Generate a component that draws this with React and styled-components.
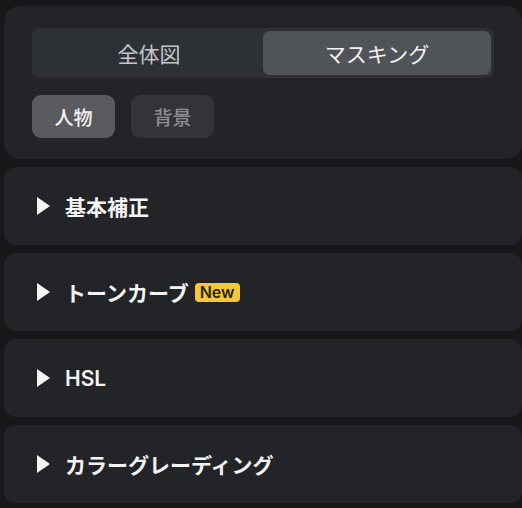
import React, { useState } from "react";
import styled, { createGlobalStyle } from "styled-components";

const GlobalStyle = createGlobalStyle`
  html, body {
    margin: 0;
    background: #17181a;
    font-family: Inter, "Noto Sans CJK JP", sans-serif;
  }
`;

const Page = styled.div`
  padding: 6px 0 0 4px;
  display: flex;
  flex-direction: column;
  gap: 8px;
`;

const Card = styled.div`
  background: #222427;
  border-radius: 16px;
  padding: 22px 28px 21px;
`;

const Segment = styled.div`
  display: grid;
  grid-template-columns: 1fr 1fr;
  background: #2d3135;
  border-radius: 8px;
  padding: 3px;
  height: 50px;
  box-sizing: border-box;
`;

const SegButton = styled.button`
  border: none;
  border-radius: 7px;
  background: ${p => (p.$active ? "#505357" : "transparent")};
  color: ${p => (p.$active ? "#f2f2f2" : "#c4c6c8")};
  font-family: inherit;
  font-size: 21px;
  cursor: pointer;
`;

const Chips = styled.div`
  display: flex;
  gap: 16px;
  margin-top: 17px;
`;

const Chip = styled.button`
  width: 83px;
  height: 43px;
  border: none;
  border-radius: 9px;
  background: ${p => (p.$active ? "#5a5b5e" : "#333437")};
  color: ${p => (p.$active ? "#f4f4f4" : "#8e8f91")};
  font-family: inherit;
  font-size: 19px;
  font-weight: 500;
  cursor: pointer;
`;

const Section = styled.div`
  background: #222427;
  border-radius: 12px;
  height: 78px;
  display: flex;
  align-items: center;
  padding-left: 33px;
  gap: 15px;
  color: #f4f4f4;
  font-size: 21px;
  font-weight: 600;
`;

const Arrow = styled.span`
  width: 0;
  height: 0;
  border-top: 9px solid transparent;
  border-bottom: 9px solid transparent;
  border-left: 13px solid #f4f4f4;
`;

const Title = styled.span`
  display: flex;
  align-items: center;
  gap: 6px;
`;

const Badge = styled.span`
  background: #f3c93b;
  color: #2b2410;
  font-size: 16px;
  font-weight: 600;
  border-radius: 4px;
  padding: 0 5px;
  height: 19px;
  line-height: 19px;
`;

const sections = [
  { name: "基本補正" },
  { name: "トーンカーブ", isNew: true },
  { name: "HSL" },
  { name: "カラーグレーディング" },
];

export default function App() {
  const [view, setView] = useState("mask");
  const [target, setTarget] = useState("person");

  return (
    <Page>
      <GlobalStyle />
      <Card>
        <Segment>
          <SegButton $active={view === "all"} onClick={() => setView("all")}>全体図</SegButton>
          <SegButton $active={view === "mask"} onClick={() => setView("mask")}>マスキング</SegButton>
        </Segment>
        <Chips>
          <Chip $active={target === "person"} onClick={() => setTarget("person")}>人物</Chip>
          <Chip $active={target === "bg"} onClick={() => setTarget("bg")}>背景</Chip>
        </Chips>
      </Card>
      {sections.map(s => (
        <Section key={s.name}>
          <Arrow />
          <Title>
            {s.name}
            {s.isNew && <Badge>New</Badge>}
          </Title>
        </Section>
      ))}
    </Page>
  );
}
